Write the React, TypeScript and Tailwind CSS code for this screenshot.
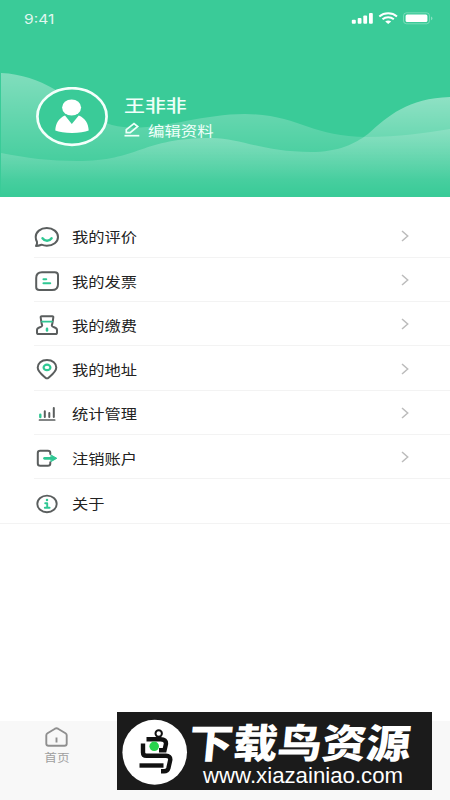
import type { ReactNode } from 'react'

const ICON_PROPS = {
  width: 26,
  height: 22,
  viewBox: '0 0 26 22',
  fill: 'none',
  stroke: '#5a5e5e',
  strokeWidth: 2,
  strokeLinecap: 'round' as const,
  strokeLinejoin: 'round' as const,
}

const GREEN = '#2fc793'

function CommentIcon() {
  return (
    <svg {...ICON_PROPS}>
      <path d="M2 20c1-1.500 1.300-2.800 1-4.100C2 14.400 1.700 12.500 1.700 11 1.700 5.800 6.500 2.100 12.800 2.100S24 5.800 24 11s-4.800 8.700-11.200 8.700c-2 0-3.600-.3-5.300-1C5.800 19.300 4 19.800 2 20z" />
      <path d="M8.500 12.300c2.300 3.300 6.800 3.300 9.100 0" stroke={GREEN} strokeWidth={2.400} />
    </svg>
  )
}

function InvoiceIcon() {
  return (
    <svg {...ICON_PROPS}>
      <path d="M8 1.300h12.800c2 0 3.200 1 3.200 2.800v9.100c0 3.600-2.200 5.900-6 5.900H5.400c-2 0-3.200-1-3.200-2.800V7c0-3.500 2.200-5.700 5.800-5.700z" />
      <path d="M9.500 8.200h2.700M9.500 12.200h6.700" stroke={GREEN} strokeWidth={2.100} />
    </svg>
  )
}

function PaymentIcon() {
  return (
    <svg {...ICON_PROPS}>
      <path d="M7.700 1.300h10.600c.8 0 1.200.5 1 1.300-.5 3-.6 5.700-1.500 7.800 0 2.100 5.200 1.700 5.200 4.500v2.600c0 1-.6 1.600-1.600 1.600H4.600c-1 0-1.600-.6-1.600-1.600v-2.600c0-2.800 5.200-2.400 5.200-4.500-.9-2.100-1-4.800-1.500-7.800-.2-.8.200-1.300 1-1.300z" />
      <path d="M8 6.600h10" stroke={GREEN} strokeWidth={1.900} />
      <path d="M13 13.800v1.800" stroke={GREEN} strokeWidth={2.500} />
    </svg>
  )
}

function AddressIcon() {
  return (
    <svg {...ICON_PROPS}>
      <path d="M13 1c5.700 0 9.300 3.300 9.300 7.500 0 4-3.900 6.900-7.700 10.200-1 .8-2.200.8-3.200 0-3.800-3.300-7.700-6.200-7.700-10.200C3.700 4.300 7.300 1 13 1z" />
      <ellipse cx="13" cy="8.400" rx="3.400" ry="2.700" stroke={GREEN} strokeWidth={2.200} />
    </svg>
  )
}

function StatsIcon() {
  return (
    <svg {...ICON_PROPS}>
      <path d="M5.500 17h15.200" strokeWidth={1.700} />
      <path d="M6.300 11.800v2.200" stroke={GREEN} strokeWidth={2.400} />
      <path d="M10.800 8.300V14M15.300 10v4M19.800 5v9" />
    </svg>
  )
}

function LogoutIcon() {
  return (
    <svg {...ICON_PROPS}>
      <path d="M16.300 6V5c0-1.500-.8-2.300-2.400-2.300H6.200c-1.600 0-2.400.8-2.400 2.300v10.500c0 1.500.8 2.300 2.400 2.300h7.700c1.600 0 2.400-.8 2.400-2.300v-1.200" />
      <path d="M10.500 10.300H18" stroke={GREEN} strokeWidth={2.700} />
      <path d="M17.300 7.200l5.500 3.100-5.500 3.100z" fill={GREEN} stroke={GREEN} strokeWidth={1} />
    </svg>
  )
}

function AboutIcon() {
  return (
    <svg {...ICON_PROPS}>
      <ellipse cx="13" cy="10.900" rx="9.700" ry="8.300" strokeWidth={1.900} />
      <path d="M13 6.900v.2" stroke={GREEN} strokeWidth={2.500} />
      <path d="M11.200 10.200h2v4.300M10.800 14.800h4.800" stroke={GREEN} strokeWidth={1.900} />
    </svg>
  )
}

type MenuItem = { label: string; icon: ReactNode; arrow: boolean }

const MENU_ITEMS: MenuItem[] = [
  { label: '我的评价', icon: <CommentIcon />, arrow: true },
  { label: '我的发票', icon: <InvoiceIcon />, arrow: true },
  { label: '我的缴费', icon: <PaymentIcon />, arrow: true },
  { label: '我的地址', icon: <AddressIcon />, arrow: true },
  { label: '统计管理', icon: <StatsIcon />, arrow: true },
  { label: '注销账户', icon: <LogoutIcon />, arrow: true },
  { label: '关于', icon: <AboutIcon />, arrow: false },
]

function Waves() {
  return (
    <svg className="absolute inset-0" width="450" height="197" viewBox="0 0 450 197">
      <defs>
        <linearGradient id="waveBack" gradientUnits="userSpaceOnUse" x1="0" y1="73" x2="0" y2="180">
          <stop offset="0" stopColor="#fff" stopOpacity=".36" />
          <stop offset="1" stopColor="#fff" stopOpacity="0" />
        </linearGradient>
        <linearGradient id="waveFront" gradientUnits="userSpaceOnUse" x1="0" y1="97" x2="0" y2="195">
          <stop offset="0" stopColor="#fff" stopOpacity=".43" />
          <stop offset="1" stopColor="#fff" stopOpacity="0" />
        </linearGradient>
      </defs>
      <path
        fill="url(#waveBack)"
        d="M1 73C22 74 38 80 54 89C78 102 92 119 112 125C150 135 195 114 245 114C300 115 310 137 367 137C400 137 424 133 450 129V197H1z"
      />
      <path
        fill="url(#waveFront)"
        d="M1 153C26 158 50 161 77 161C140 161 140 138 212 138C240 138 262 152 311 152C338 152 355 144 368 134C388 116 408 98 450 97V197H1z"
      />
    </svg>
  )
}

function StatusBar() {
  return (
    <div className="relative flex h-9 items-center justify-between pt-1 pr-[17px] pl-6 text-white">
      <span className="mb-0.5 origin-left scale-x-[1.2] font-['Inter'] text-[13px] leading-none opacity-85">9:41</span>
      <svg width="82" height="14" viewBox="0 0 82 14" fill="#fff" className="-mt-1">
        <rect x="0.800" y="8.800" width="4" height="4" rx="1" />
        <rect x="6.700" y="7" width="3.800" height="5.800" rx="1" />
        <rect x="12.300" y="4.500" width="3.800" height="8.300" rx="1" />
        <rect x="18" y="2" width="3.800" height="10.800" rx="1" />
        <g fill="none" stroke="#fff" strokeWidth="2">
          <path d="M28.300 5.500c5-4.300 12.700-4.300 17.700 0" />
          <path d="M31.500 8.300c3.300-2.700 8-2.700 11.300 0" />
        </g>
        <path d="M34.200 10.500c1.800-1.300 4.200-1.300 6 0l-3 2.500z" />
        <rect x="52.500" y="1.800" width="26" height="11" rx="3" fill="none" stroke="#fff" strokeOpacity=".3" />
        <rect x="54.600" y="3.600" width="21.800" height="7.400" rx="1.500" />
        <path d="M80 5.500c2 .8 2 3 0 3.700z" fillOpacity=".4" />
      </svg>
    </div>
  )
}

function Header() {
  return (
    <header className="relative h-[197px] bg-[#3acb98]">
      <Waves />
      <StatusBar />
      <div className="relative mt-[51px] flex pl-9">
        <svg width="72" height="60" viewBox="0 0 72 60">
          <ellipse cx="36" cy="29.500" rx="34.600" ry="28.300" fill="#3acb98" stroke="#f4fffb" strokeWidth="2.700" />
          <ellipse cx="35.600" cy="20.500" rx="9.500" ry="8" fill="#fff" />
          <path d="M29 28.500L35.800 37l7-8.500C49 31 52.500 36.500 52.700 43.500C49 44.900 43 46 36 46s-13-1.100-16.700-2.500C19.500 36.500 23 31 29 28.500z" fill="#fff" />
        </svg>
        <div className="ml-4 pt-2 text-[#effff9]">
          <div className="h-[21px] w-max origin-left scale-x-[1.23] text-[17px] leading-[20px] font-medium">王非非</div>
          <div className="mt-1 flex items-center">
            <svg width="17" height="17" viewBox="0 0 17 17" fill="none" stroke="#effff9" strokeWidth="1.700" className="mb-px">
              <path d="M2.300 11.600V8.700L10 2.500l3.700 3-7.500 6.100z" />
              <path d="M.500 14.700h14.800" />
            </svg>
            <span className="ml-[7px] origin-left scale-x-[1.17] text-[14px] leading-[20px]">编辑资料</span>
          </div>
        </div>
      </div>
    </header>
  )
}

function MenuRow({ item, last }: { item: MenuItem; last: boolean }) {
  return (
    <li className={last ? 'border-b border-[#f3f3f3] pl-[34px]' : 'pl-[34px]'}>
      <div
        className={
          last
            ? 'flex h-[43.300px] items-center pt-[5px]'
            : 'flex h-[44.300px] items-center border-b border-[#f3f3f3] pt-1'
        }
      >
        {item.icon}
        <span className="mb-0.5 ml-3 origin-left scale-x-[1.16] text-[14px] leading-5 text-[#222]">{item.label}</span>
        {item.arrow && (
          <svg width="8" height="12" viewBox="0 0 8 12" fill="none" stroke="#bcbcbc" strokeWidth="1.500" className="mr-[41px] mb-[3px] ml-auto">
            <path d="M1 1l5.700 5L1 11" />
          </svg>
        )}
      </div>
    </li>
  )
}

function Watermark() {
  return (
    <div className="absolute top-[712px] left-[117px] flex h-[78px] w-[315px] bg-[#1b1b1b] text-white">
      <svg width="72" height="78" viewBox="0 0 72 78" className="shrink-0">
        <ellipse cx="37.700" cy="40.200" rx="32.300" ry="32.500" fill="#fff" />
        <g fill="none" stroke="#111" strokeWidth="4.400">
          <circle cx="41.700" cy="21.500" r="3.200" strokeWidth="2" />
          <path d="M29.500 27.300h14q5.500 0 5.500 4.500l-1.500 6.500H42" />
          <path d="M26 31.500v9q0 3.300 3.500 3.300h19.500q4.500 0 4.300 4l-1.800 8q-1 3.500-4.500 3.500h-3" />
          <path d="M22.500 53.500h24" />
        </g>
        <circle cx="37.200" cy="34.300" r="4.800" fill="#27d34c" />
      </svg>
      <div className="pt-[10px]">
        <div className="h-[41px] w-max origin-left scale-x-[1.11] skew-x-[-5deg] text-[40px] leading-[38px] font-black">下载鸟资源</div>
        <div className="ml-[14px] w-max origin-left scale-x-[1.01] font-['Liberation_Sans'] text-[22px] leading-[25px]">www.xiazainiao.com</div>
      </div>
    </div>
  )
}

export default function App() {
  return (
    <div className="relative flex h-[800px] w-[450px] flex-col overflow-hidden bg-white font-['Noto_Sans_CJK_SC',sans-serif]">
      <Header />

      <ul className="flex-1 pt-[16.600px]">
        {MENU_ITEMS.map((item, i) => (
          <MenuRow key={item.label} item={item} last={i === MENU_ITEMS.length - 1} />
        ))}
      </ul>

      {/* Tab bar */}
      <nav className="h-[79px] bg-[#f8f8f8] pl-[43px]">
        <div className="flex w-[27px] flex-col items-center pt-[6px] text-[#a0a0a0]">
          <svg width="24" height="21" viewBox="0 0 24 21" fill="none" stroke="#8f8f8f" strokeWidth="1.900" strokeLinejoin="round">
            <path d="M10 1.700q1.500-.8 3 0l7.500 4.600q1.200.8 1.200 2v8.500q0 2-2.200 2h-16q-2.200 0-2.200-2V8.300q0-1.200 1.200-2z" />
            <path d="M11.500 10.500v5" />
          </svg>
          <span className="w-max scale-x-[1.15] text-[11px] leading-[18px]">首页</span>
        </div>
      </nav>

      <Watermark />
    </div>
  )
}
